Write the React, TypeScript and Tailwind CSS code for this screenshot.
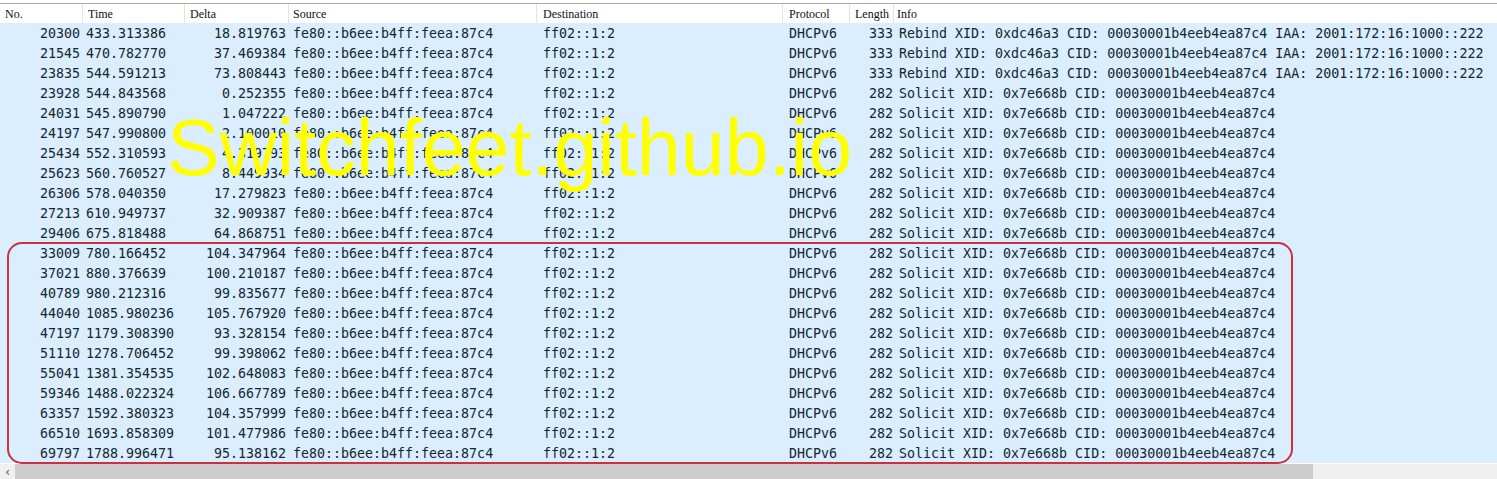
import React from "react";

type Row = [string, string, string, "R" | "S"];

const rows: Row[] = [
  ["20300", "433.313386", "18.819763", "R"],
  ["21545", "470.782770", "37.469384", "R"],
  ["23835", "544.591213", "73.808443", "R"],
  ["23928", "544.843568", "0.252355", "S"],
  ["24031", "545.890790", "1.047222", "S"],
  ["24197", "547.990800", "2.100010", "S"],
  ["25434", "552.310593", "4.319793", "S"],
  ["25623", "560.760527", "8.449934", "S"],
  ["26306", "578.040350", "17.279823", "S"],
  ["27213", "610.949737", "32.909387", "S"],
  ["29406", "675.818488", "64.868751", "S"],
  ["33009", "780.166452", "104.347964", "S"],
  ["37021", "880.376639", "100.210187", "S"],
  ["40789", "980.212316", "99.835677", "S"],
  ["44040", "1085.980236", "105.767920", "S"],
  ["47197", "1179.308390", "93.328154", "S"],
  ["51110", "1278.706452", "99.398062", "S"],
  ["55041", "1381.354535", "102.648083", "S"],
  ["59346", "1488.022324", "106.667789", "S"],
  ["63357", "1592.380323", "104.357999", "S"],
  ["66510", "1693.858309", "101.477986", "S"],
  ["69797", "1788.996471", "95.138162", "S"],
];

const grid =
  "grid grid-cols-[83px_102px_104px_248px_246px_67px_44px_1fr]";

function Header() {
  const cell = "h-full flex items-center border-r border-[#e3e3e3] whitespace-nowrap";
  return (
    <div className="h-[20px] bg-white border-t border-[#a9a9a9] mt-[3px] box-border">
      <div
        className={`${grid} h-full text-[12px] text-[#111]`}
        style={{ fontFamily: '"Liberation Serif", "Times New Roman", serif' }}
      >
        <div className={`${cell} pl-[5px]`}>No.</div>
        <div className={`${cell} pl-[5px]`}>Time</div>
        <div className={`${cell} pl-[5px]`}>Delta</div>
        <div className={`${cell} pl-[4px]`}>Source</div>
        <div className={`${cell} pl-[6px]`}>Destination</div>
        <div className={`${cell} pl-[6px]`}>Protocol</div>
        <div className={`${cell} pl-[5px]`}>Length</div>
        <div className="h-full flex items-center pl-[3px]">Info</div>
      </div>
    </div>
  );
}

function DataRow({ r }: { r: Row }) {
  const [no, time, delta, kind] = r;
  const rebind = kind === "R";
  const info = rebind
    ? "Rebind XID: 0xdc46a3 CID: 00030001b4eeb4ea87c4 IAA: 2001:172:16:1000::222"
    : "Solicit XID: 0x7e668b CID: 00030001b4eeb4ea87c4";
  return (
    <div className={`${grid} h-[20px] box-border pt-[2px] items-center bg-[#daeeff] text-[#12272e] whitespace-nowrap`}>
      <div className="text-right pr-[3px]">{no}</div>
      <div className="pl-[3px]">{time}</div>
      <div className="text-right pr-[3px]">{delta}</div>
      <div className="pl-[4px]">fe80::b6ee:b4ff:feea:87c4</div>
      <div className="pl-[6px]">ff02::1:2</div>
      <div className="pl-[6px]">DHCPv6</div>
      <div className="text-right pr-[1px]">{rebind ? "333" : "282"}</div>
      <div className="pl-[5px] overflow-hidden">{info}</div>
    </div>
  );
}

export default function App() {
  return (
    <div className="relative w-[1497px] h-[479px] overflow-hidden bg-white">
      <Header />
      <div
        className="text-[13.3px] leading-[18px]"
        style={{ fontFamily: '"DejaVu Sans Mono", "Liberation Mono", monospace' }}
      >
        {rows.map((r) => (
          <DataRow key={r[0]} r={r} />
        ))}
      </div>
      <div className="h-[16px] flex bg-[#f0f0f0] border-t border-white box-border">
        <div
          className="w-[15px] h-full flex items-center justify-center text-[13px] leading-[14px] text-[#606060]"
          style={{ fontFamily: '"DejaVu Sans", sans-serif' }}
        >
          ‹
        </div>
        <div className="w-[1298px] h-full bg-[#cdcdcd]" />
        <div className="flex-1" />
      </div>

      <div className="absolute left-[7px] top-[242px] w-[1286px] h-[222px] border-2 border-[#c9313c] rounded-[15px] pointer-events-none" />

      <div
        className="absolute left-[167px] top-[108px] text-[79px] leading-none text-[#ffff00] whitespace-nowrap pointer-events-none"
        style={{ fontFamily: '"Liberation Sans", Arial, sans-serif' }}
      >
        Switchfeet.github.io
      </div>
    </div>
  );
}
